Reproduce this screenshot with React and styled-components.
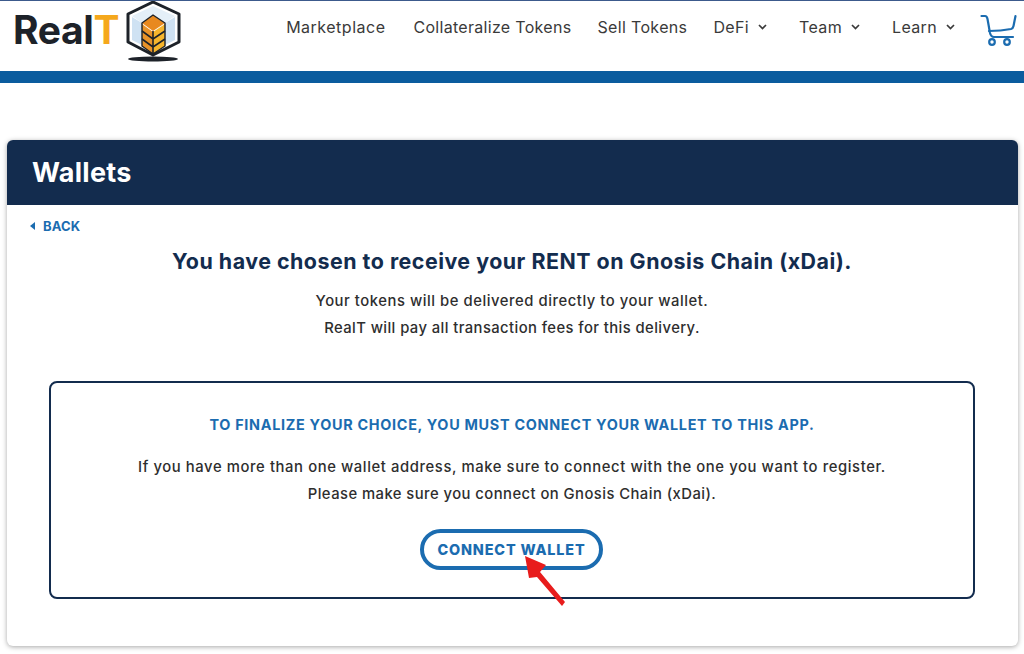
import React from 'react';
import styled, { createGlobalStyle } from 'styled-components';

const Global = createGlobalStyle`
	* { box-sizing: border-box; }
	html, body { margin: 0; padding: 0; background: #fff; }
	body { font-family: Inter, "Open Sans", sans-serif; color: #2b2b2b; width: 1024px; height: 654px; overflow: hidden; }
`;

const Header = styled.header`
	height: 83px;
	border-top: 1px solid #3c5a8c;
	border-bottom: 12px solid #0b5c9e;
	display: flex;
	align-items: flex-start;
	justify-content: space-between;
	padding: 0 7px 0 13px;
`;

const Logo = styled.div`
	display: flex;
	align-items: flex-start;
	width: 173px;
	justify-content: space-between;
`;

const LogoText = styled.span`
	font: 700 39px/1 "Inter", sans-serif;
	letter-spacing: -0.4px;
	color: #1d2229;
	margin-top: 9px;
	span { color: #f5a81c; }
`;

const Nav = styled.nav`
	display: flex;
	align-items: flex-start;
`;

const NavItem = styled.a`
	display: flex;
	align-items: center;
	gap: 9px;
	font-size: 16px;
	letter-spacing: ${props => props.$spread}px;
	line-height: 20px;
	color: #3a3a3a;
	margin-top: 16px;
	margin-right: ${props => props.$gap}px;
	white-space: nowrap;
`;

const Cart = styled.svg`
	margin-top: 13px;
	display: block;
`;

const Card = styled.section`
	margin: 57px 6px 0 7px;
	height: 506px;
	border-radius: 6px;
	box-shadow: 0 1px 5px rgba(0,0,0,.35);
	overflow: hidden;
	background: #fff;
	position: relative;
`;

const CardHead = styled.div`
	height: 65px;
	background: #132c4e;
	display: flex;
	align-items: center;
	padding-left: 25px;
	h1 {
		margin: 0;
		font-size: 27px;
		letter-spacing: .3px;
		font-weight: 700;
		color: #fff;
	}
`;

const CardBody = styled.div`
	padding: 13px 43px 0 42px;
	display: flex;
	flex-direction: column;
	align-items: center;
`;

const Back = styled.a`
	align-self: flex-start;
	margin-left: -19px;
	display: flex;
	align-items: center;
	gap: 8px;
	font-size: 13px;
	letter-spacing: .1px;
	line-height: 16px;
	font-weight: 700;
	color: #1b6cb0;
	&::before {
		content: '';
		border: 4px solid transparent;
		border-left: 0;
		border-right: 5px solid #1b6cb0;
	}
`;

const Title = styled.h2`
	margin: 12px 0 0;
	font-size: 21.4px;
	letter-spacing: .5px;
	line-height: 30px;
	font-weight: 700;
	color: #132c4e;
	white-space: nowrap;
`;

const Line = styled.p`
	margin: ${props => props.$top}px 0 0;
	font-size: 14.8px;
	letter-spacing: ${props => props.$spread}px;
	line-height: 20px;
	font-weight: 500;
	color: #2e2e2e;
	text-align: center;
	white-space: nowrap;
`;

const Box = styled.div`
	position: relative;
	width: 926px;
	height: 218px;
	margin-top: 43px;
	border: 2px solid #132c4e;
	border-radius: 8px;
	display: flex;
	flex-direction: column;
	align-items: center;
	padding-top: 32px;
`;

const Notice = styled.h3`
	margin: 0;
	font-size: 14.4px;
	letter-spacing: .7px;
	line-height: 20px;
	font-weight: 700;
	color: #1b6cb0;
	white-space: nowrap;
`;

const Connect = styled.button`
	width: 183px;
	height: 41px;
	margin: 25px 1px 0 0;
	border: 4px solid #1b6cb0;
	border-radius: 21px;
	background: #fff;
	color: #1b6cb0;
	font: 800 14.4px/1 Inter, sans-serif;
	letter-spacing: .85px;
	padding: 2px 0 0;
`;

const Arrow = styled.svg`
	position: absolute;
	left: 471px;
	top: 170px;
`;

const Chevron = () => (
	<svg width="9" height="6" viewBox="0 0 9 6" fill="none" stroke="#3a3a3a" strokeWidth="1.7">
		<path d="M1 1l3.5 3.5L8 1" />
	</svg>
);

const navItems = [
	{ label: 'Marketplace', gap: 28, spread: .5 },
	{ label: 'Collateralize Tokens', gap: 26, spread: .3 },
	{ label: 'Sell Tokens', gap: 26, spread: .35 },
	{ label: 'DeFi', gap: 32, spread: .35, menu: true },
	{ label: 'Team', gap: 32, spread: .35, menu: true },
	{ label: 'Learn', gap: 25, spread: .35, menu: true }
];

const App = () => {
	return (
		<>
			<Global />
			<Header>
				<Logo>
					<LogoText>Real<span>T</span></LogoText>
					<svg width="66" height="64" viewBox="0 1 66 64">
						<path d="M33 2L59 14V42L33 55L8 42V14Z" fill="#fff" />
						<path d="M12 17L22 23V45L12 40Z" fill="#cfe2f3" />
						<path d="M55 17L45 23V45L55 40Z" fill="#cfe2f3" />
						<path d="M12 16L33 6L55 16L45 23L33 15L22 23Z" fill="#e4eff8" />
						<path d="M22 24L33 32V54L22 46Z" fill="#e8932a" />
						<path d="M45 24L33 32V54L45 46Z" fill="#f6b52c" />
						<path d="M33 15L45 23L33 31L22 23Z" fill="#e8891f" />
						<path d="M22 31L33 39L45 31M22 39L33 47L45 39M33 31V54" stroke="#1d2229" strokeWidth="1.6" fill="none" />
						<path d="M22 23L33 15L45 23V46L33 54L22 46Z" fill="none" stroke="#1d2229" strokeWidth="1.4" />
						<path d="M33 2L59 14V42L33 55L8 42V14Z" fill="none" stroke="#1d2229" strokeWidth="3" strokeLinejoin="round" />
						<ellipse cx="33" cy="59" rx="25" ry="2.4" fill="#1d2229" />
					</svg>
				</Logo>
				<Nav>
					{navItems.map(item => (
						<NavItem key={item.label} $gap={item.gap} $spread={item.spread}>
							{item.label}
							{item.menu && <Chevron />}
						</NavItem>
					))}
					<Cart width="37" height="36" viewBox="0 0 37 36" fill="none" stroke="#1b6cb0" strokeWidth="2.2" strokeLinecap="round" strokeLinejoin="round">
						<path d="M1.5 2H5Q7 2 7.5 5L10 19Q11 23 14 23H33" />
						<path d="M9 17C17 17 26 16 31 15Q33 14.5 33.5 12L35.5 2" />
						<circle cx="12" cy="28" r="2.8" />
						<circle cx="27" cy="28" r="2.8" />
					</Cart>
				</Nav>
			</Header>
			<Card>
				<CardHead><h1>Wallets</h1></CardHead>
				<CardBody>
					<Back>BACK</Back>
					<Title>You have chosen to receive your RENT on Gnosis Chain (xDai).</Title>
					<Line $top={15} $spread={.55}>Your tokens will be delivered directly to your wallet.</Line>
					<Line $top={7} $spread={.42}>RealT will pay all transaction fees for this delivery.</Line>
					<Box>
						<Notice>TO FINALIZE YOUR CHOICE, YOU MUST CONNECT YOUR WALLET TO THIS APP.</Notice>
						<Line $top={22} $spread={.6}>If you have more than one wallet address, make sure to connect with the one you want to register.</Line>
						<Line $top={7} $spread={.45}>Please make sure you connect on Gnosis Chain (xDai).</Line>
						<Connect>CONNECT WALLET</Connect>
						<Arrow width="45" height="55" viewBox="0 0 45 55">
							<path d="M3 3L24 12L18 19L43 49L40 53L15 24L7 25Z" fill="#e81c1c" />
						</Arrow>
					</Box>
				</CardBody>
			</Card>
		</>
	);
}

export default App;
